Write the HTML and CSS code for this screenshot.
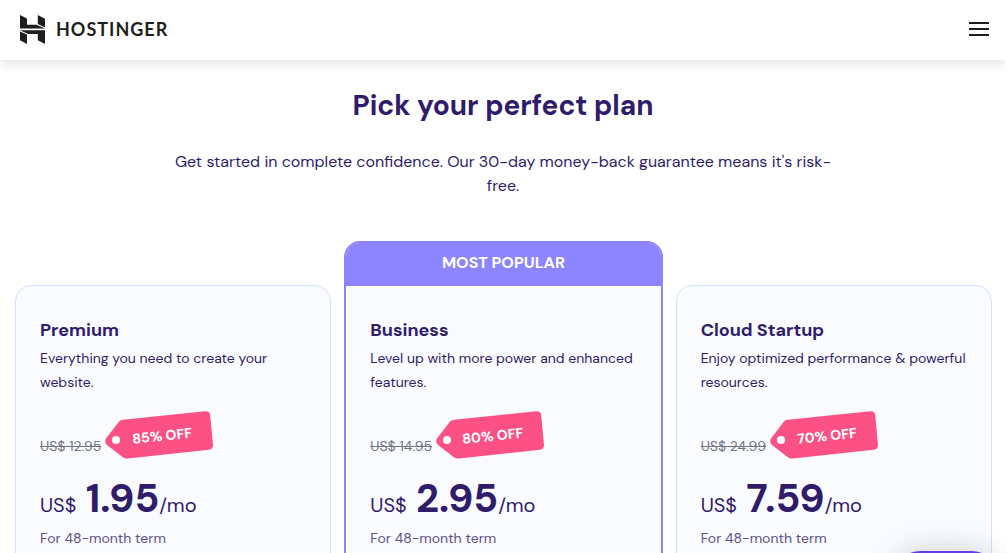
FILE: index.html
```html
<!DOCTYPE html>
<html lang="en">
<head>
<meta charset="utf-8">
<meta name="viewport" content="width=device-width, initial-scale=1">
<title>Hostinger – Pick your perfect plan</title>
<link rel="stylesheet" href="styles.css">
</head>
<body>
<header class="site-header">
  <a class="brand" href="#">
    <svg class="brand-mark" viewBox="0 0 25 29" aria-hidden="true">
      <path d="M0 0l7 3.600v6.200h9.600l8.400 3.800H0zM17.800 0L25 3.800v8.600l-7.200-3.300zM0 15.200h25V29l-7.200-3.800v-6.100H8.100zM0 16.400l7 3.200V29l-7-3.800z"/>
    </svg>
    <span class="brand-name">HOSTINGER</span>
  </a>
  <button class="menu-button" type="button" aria-label="Open menu">
    <span class="menu-line"></span><span class="menu-line"></span><span class="menu-line"></span>
  </button>
</header>
<main class="pricing">
  <div class="intro">
    <h1 class="title">Pick your perfect plan</h1>
    <p class="subtitle">Get started in complete confidence. Our 30-day money-back guarantee means it's risk-free.</p>
  </div>
  <div class="plans">
    <article class="plan">
      <h2 class="plan-name">Premium</h2>
      <p class="plan-text">Everything you need to create your website.</p>
      <div class="offer">
        <s class="old-price">US$ 12.95</s>
        <span class="tag"><svg class="tag-shape" viewBox="0 0 108 48" aria-hidden="true"><path class="tag-fill" d="M14 10.500Q15.500 9 18 8.800L100 .3Q104.700 0 105.200 4L108 34Q108 38 104 38.700L23 47.500Q20 48 17.500 46L2 34Q-1 31 1 27.500Z"/><circle class="tag-hole" cx="11" cy="29" r="4"/></svg><span class="tag-text">85% OFF</span></span>
      </div>
      <p class="price">US$ <strong class="amount">1.95</strong>/mo</p>
      <p class="term">For 48-month term</p>
    </article>
    <article class="plan plan-popular">
      <div class="ribbon">MOST POPULAR</div>
      <h2 class="plan-name">Business</h2>
      <p class="plan-text">Level up with more power and enhanced features.</p>
      <div class="offer">
        <s class="old-price">US$ 14.95</s>
        <span class="tag"><svg class="tag-shape" viewBox="0 0 108 48" aria-hidden="true"><path class="tag-fill" d="M14 10.500Q15.500 9 18 8.800L100 .3Q104.700 0 105.200 4L108 34Q108 38 104 38.700L23 47.500Q20 48 17.500 46L2 34Q-1 31 1 27.500Z"/><circle class="tag-hole" cx="11" cy="29" r="4"/></svg><span class="tag-text">80% OFF</span></span>
      </div>
      <p class="price">US$ <strong class="amount">2.95</strong>/mo</p>
      <p class="term">For 48-month term</p>
    </article>
    <article class="plan">
      <h2 class="plan-name">Cloud Startup</h2>
      <p class="plan-text">Enjoy optimized performance &amp; powerful resources.</p>
      <div class="offer">
        <s class="old-price">US$ 24.99</s>
        <span class="tag"><svg class="tag-shape" viewBox="0 0 108 48" aria-hidden="true"><path class="tag-fill" d="M14 10.500Q15.500 9 18 8.800L100 .3Q104.700 0 105.200 4L108 34Q108 38 104 38.700L23 47.500Q20 48 17.500 46L2 34Q-1 31 1 27.500Z"/><circle class="tag-hole" cx="11" cy="29" r="4"/></svg><span class="tag-text">70% OFF</span></span>
      </div>
      <p class="price">US$ <strong class="amount">7.59</strong>/mo</p>
      <p class="term">For 48-month term</p>
    </article>
  </div>
</main>
<button class="chat-button" type="button" aria-label="Open chat"></button>
</body>
</html>
```

FILE: styles.css
```css
* {
  box-sizing: border-box;
}

body {
  margin: 0;
  height: 100vh;
  overflow: hidden;
  background: #fff;
  color: #2f1c6a;
  font-family: "DM Sans", Inter, sans-serif;
  font-size: 16px;
  line-height: 24px;
}

h1, h2, p {
  margin: 0;
}

.site-header {
  display: flex;
  align-items: center;
  justify-content: space-between;
  height: 60px;
  padding: 0 17px 2px 20px;
  background: #fff;
  box-shadow: 0 3px 12px rgba(0, 0, 0, 0.12);
}

.brand {
  display: flex;
  align-items: center;
  gap: 11px;
  color: #1d1e20;
  text-decoration: none;
}

.brand-mark {
  width: 25px;
  height: 29px;
  fill: currentColor;
}

.brand-name {
  font-family: Lato, sans-serif;
  font-size: 18px;
  font-weight: 700;
  letter-spacing: 1px;
}

.menu-button {
  display: flex;
  flex-direction: column;
  gap: 4px;
  padding: 0;
  border: 0;
  background: none;
}

.menu-line {
  width: 20px;
  height: 2px;
  background: #1d1e20;
}

.intro {
  max-width: 690px;
  margin: 0 auto;
  padding: 28px 15px 0;
  text-align: center;
}

.title {
  font-size: 28px;
  font-weight: 700;
  line-height: 36px;
}

.subtitle {
  margin-top: 26px;
}

.plans {
  display: grid;
  grid-template-columns: repeat(3, minmax(0, 1fr));
  align-items: end;
  gap: 14px;
  padding: 43px 14px 0 15px;
}

.plan {
  padding: 30px 24px 60px;
  border: 1px solid #d5dfff;
  border-radius: 16px;
  background: #fafbff;
}

.plan-popular {
  margin: 0 -1px;
  padding-top: 0;
  padding-bottom: 59px;
  border: 2px solid #8c85ff;
  overflow: hidden;
}

.ribbon {
  height: 43px;
  margin: 0 -24px 30px;
  background: #8c85ff;
  color: #fff;
  font-weight: 700;
  line-height: 40px;
  text-align: center;
}

.plan-name {
  font-size: 18px;
  font-weight: 700;
  line-height: 28px;
}

.plan-text {
  margin-top: 2px;
  font-size: 14px;
}

.offer {
  display: flex;
  align-items: flex-start;
  gap: 4px;
  height: 67px;
  margin-top: 17px;
}

.old-price {
  margin-top: 23px;
  color: #727586;
  font-size: 14px;
}

.tag {
  display: grid;
  place-items: center;
  width: 108px;
  height: 48px;
}

.tag-shape,
.tag-text {
  grid-area: 1 / 1;
}

.tag-shape {
  width: 108px;
  height: 48px;
}

.tag-fill {
  fill: #fc5185;
}

.tag-hole {
  fill: #fafbff;
}

.tag-text {
  padding: 2px 0 0 6px;
  color: #fff;
  font-size: 14px;
  font-weight: 700;
  transform: rotate(-6deg);
}

.price {
  font-size: 20px;
  line-height: 40px;
}

.amount {
  margin-left: 4px;
  font-size: 40px;
  font-weight: 700;
}

.term {
  margin-top: 1px;
  color: #5d4f88;
  font-size: 14px;
}

.chat-button {
  position: fixed;
  right: 10px;
  bottom: -46px;
  width: 100px;
  height: 48px;
  border: 0;
  border-radius: 24px;
  background: #673de6;
  box-shadow: 0 0 30px rgba(0, 0, 0, 0.18);
}
```
